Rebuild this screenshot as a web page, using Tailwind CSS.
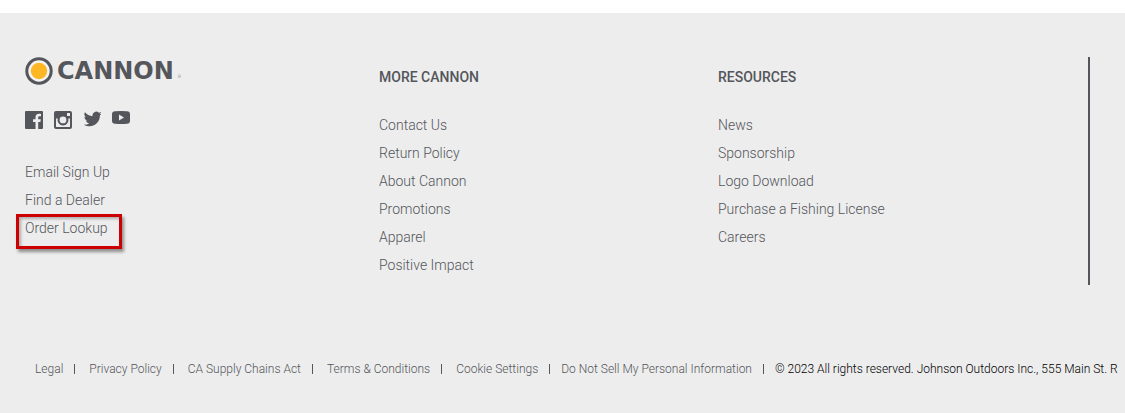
<!DOCTYPE html>
<html lang="en">
<head>
  <meta charset="UTF-8">
  <meta name="viewport" content="width=device-width, initial-scale=1.0">
  <title>Cannon</title>
  <script src="https://cdn.jsdelivr.net/npm/@tailwindcss/browser@4"></script>
</head>
<body class="bg-white pt-[13px] font-[Roboto,sans-serif] text-[#54565b] overflow-x-hidden">
  <footer class="bg-[#ededed] pt-11 pb-[30px] overflow-hidden">
    <div class="ml-[25px] mr-[35px] border-r-2 border-[#54565b] grid grid-cols-[354fr_339fr_370fr] text-sm leading-7 font-light">
      <div>
        <a href="#" class="flex items-center h-7 gap-1" aria-label="Cannon home">
          <svg class="size-7 shrink-0" viewBox="0 0 28 28">
            <circle cx="14" cy="14" r="12.2" fill="#f4f4f4" stroke="#54565b" stroke-width="3"/>
            <circle cx="14" cy="14" r="8.2" fill="#fdb725"/>
          </svg>
          <span class="font-['DejaVu_Sans',sans-serif] font-bold text-2xl leading-7">CANNON</span>
          <span class="self-end text-[4px] leading-4">®</span>
        </a>

        <!-- Social -->
        <div class="flex gap-[11px] mt-[25px] h-5">
          <a href="#" aria-label="Facebook">
            <svg class="size-[18px] mt-px" viewBox="0 0 18 18" fill="#54565b">
              <path d="M1 0h16a1 1 0 0 1 1 1v16a1 1 0 0 1-1 1h-3.800v-7h2.200l.4-2.700h-2.600V6.600c0-.8.300-1.300 1.400-1.300H16V2.900c-.3 0-1-.1-2-.1-2.200 0-3.500 1.200-3.500 3.500v2H8V11h2.500v7H1a1 1 0 0 1-1-1V1a1 1 0 0 1 1-1z"/>
            </svg>
          </a>
          <a href="#" aria-label="Instagram">
            <svg class="size-[18px] mt-px" viewBox="0 0 18 18">
              <path fill="#54565b" fill-rule="evenodd" d="M2 0h14a2 2 0 0 1 2 2v14a2 2 0 0 1-2 2H2a2 2 0 0 1-2-2V2a2 2 0 0 1 2-2zM13 2v3h3V2zM2 7.500V15.500a.6.600 0 0 0 .6.600h12.800a.6.600 0 0 0 .6-.6V7.500h-1.700a5.500 5.500 0 1 1-10.600 0zM9 5.500a3.400 3.400 0 1 0 0 6.800 3.400 3.400 0 0 0 0-6.800z"/>
            </svg>
          </a>
          <a href="#" aria-label="Twitter">
            <svg class="size-[18px]" viewBox="-1 0 24 24" fill="#54565b">
              <path d="M23.950 4.570a10 10 0 0 1-2.820.77 4.960 4.960 0 0 0 2.160-2.720c-.95.550-2 .950-3.130 1.190a4.920 4.920 0 0 0-8.380 4.480C7.690 8.090 4.070 6.130 1.640 3.160a4.930 4.930 0 0 0 1.520 6.570 4.900 4.900 0 0 1-2.230-.61v.060c0 2.380 1.700 4.370 3.950 4.820a5 5 0 0 1-2.210.09 4.940 4.940 0 0 0 4.600 3.420A9.870 9.870 0 0 1 0 19.540a13.900 13.900 0 0 0 7.550 2.210c9.050 0 14-7.500 14-13.980 0-.21 0-.42-.02-.63a9.900 9.900 0 0 0 2.420-2.570z"/>
            </svg>
          </a>
          <a href="#" aria-label="YouTube">
            <svg class="w-[18px] h-[13px] mt-px" viewBox="0 0 18 13">
              <path fill="#54565b" d="M3 .3Q9-.3 15 .3q3 .2 3 3v6.400q0 2.800-3 3-6 .6-12 0-3-.2-3-3V3.300q0-2.800 3-3z"/>
              <path fill="#ededed" d="M7 3.500v6l5-3z"/>
            </svg>
          </a>
        </div>

        <ul class="mt-7">
          <li><a href="#">Email Sign Up</a></li>
          <li><a href="#">Find a Dealer</a></li>
          <li class="relative">
            <a href="#">Order Lookup</a>
            <span class="absolute -left-[9px] top-0 w-[106px] h-[35px] border-3 border-[#cc0000] shadow-[2px_3px_3px_#0006,inset_2px_2px_3px_#0004] pointer-events-none"></span>
          </li>
        </ul>
      </div>

      <div class="py-1.5">
        <h2 class="font-medium">MORE CANNON</h2>
        <ul class="mt-5">
          <li><a href="#">Contact Us</a></li>
          <li><a href="#">Return Policy</a></li>
          <li><a href="#">About Cannon</a></li>
          <li><a href="#">Promotions</a></li>
          <li><a href="#">Apparel</a></li>
          <li><a href="#">Positive Impact</a></li>
        </ul>
      </div>

      <div class="py-1.5">
        <h2 class="font-medium">RESOURCES</h2>
        <ul class="mt-5">
          <li><a href="#">News</a></li>
          <li><a href="#">Sponsorship</a></li>
          <li><a href="#">Logo Download</a></li>
          <li><a href="#">Purchase a Fishing License</a></li>
          <li><a href="#">Careers</a></li>
        </ul>
      </div>
    </div>

    <!-- Legal -->
    <div class="mt-[70px] ml-[35px] flex items-center whitespace-nowrap text-xs leading-7 font-light">
      <a href="#">Legal</a>
      <span class="w-px h-2.5 bg-[#54565b] ml-[11px] mr-3.5 shrink-0"></span>
      <a href="#">Privacy Policy</a>
      <span class="w-px h-2.5 bg-[#54565b] ml-[11px] mr-3.5 shrink-0"></span>
      <a href="#">CA Supply Chains Act</a>
      <span class="w-px h-2.5 bg-[#54565b] ml-[11px] mr-3.5 shrink-0"></span>
      <a href="#">Terms &amp; Conditions</a>
      <span class="w-px h-2.5 bg-[#54565b] ml-[11px] mr-3.5 shrink-0"></span>
      <a href="#">Cookie Settings</a>
      <span class="w-px h-2.5 bg-[#54565b] mx-[11px] shrink-0"></span>
      <a href="#">Do Not Sell My Personal Information</a>
      <span class="w-px h-2.5 bg-[#54565b] mx-[11px] shrink-0"></span>
      <p class="text-black">© 2023 All rights reserved. Johnson Outdoors Inc., 555 Main St. R</p>
    </div>
  </footer>
</body>
</html>
